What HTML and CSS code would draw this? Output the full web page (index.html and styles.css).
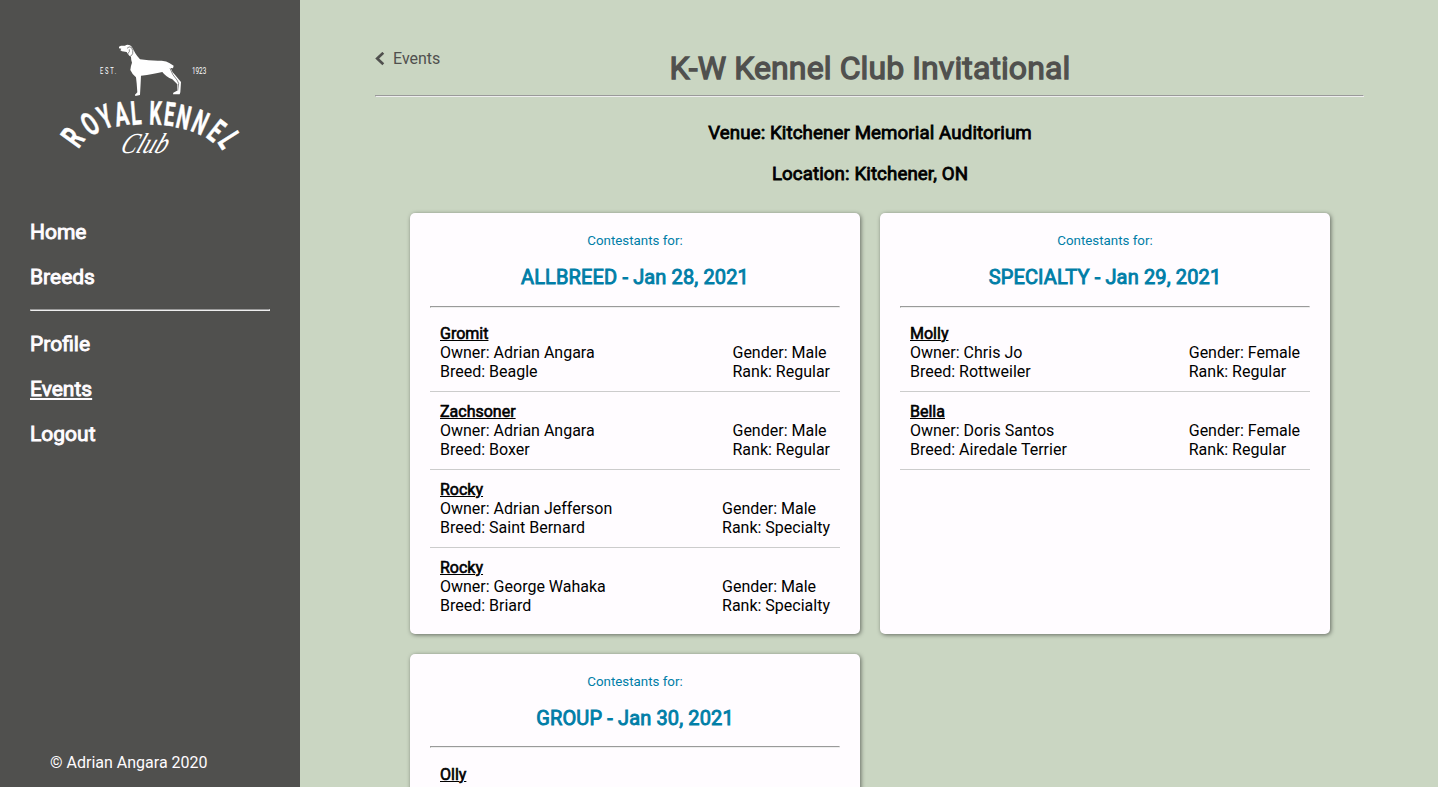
FILE: index.html
```html
<!DOCTYPE html>
<html lang="en">
<head>
<meta charset="utf-8">
<title>Royal Kennel Club</title>
<link rel="stylesheet" href="styles.css">
</head>
<body>
<div class="app">
  <aside class="sidebar">
    <svg class="logo" width="240" height="130" viewBox="30 34 240 130" role="img" aria-label="Royal Kennel Club">
      <g transform="translate(110 38) scale(.3333)">
        <path fill="#fff" d="M27 26L33 23L45 23Q52 18 60 22Q66 26 69 33L76 46Q82 56 90 64Q120 69 155 68Q170 69 178 75L191 83L189 91L182 90Q186 103 196 112L213 132L211 163L209 169L189 169L190 164L201 158L202 139L187 124Q168 117 157 102Q130 109 93 113L92 135L90 171L76 174L75 170L82 163L80 136L78 118Q66 108 61 96Q62 84 66 74Q63 66 63 57Q54 53 50 42L36 40L31 37L34 32L27 31Z"/>
        <path class="dog-line" d="M51 31Q57 24 64 28Q71 38 68 47Q64 55 59 56Q52 51 54 46Q60 42 58 34"/>
        <path class="dog-line" d="M180 91Q187 112 201 126L206 136L203 158"/>
      </g>
      <g class="logo-arc">
        <text transform="translate(73.2 137.6) rotate(-54) scale(.62 1)" y="11">R</text>
        <text transform="translate(89.9 123.8) rotate(-35) scale(.6 1)" y="11.7">O</text>
        <text transform="translate(105 116.5) rotate(-23) scale(.6 1)" y="11.7">Y</text>
        <text transform="translate(121.3 113.7) rotate(-10) scale(.62 1)" y="11.7">A</text>
        <text transform="translate(136 113) rotate(-5) scale(.58 1)" y="11.7">L</text>
        <text transform="translate(155.7 113) rotate(2) scale(.59 1)" y="11.7">K</text>
        <text transform="translate(169.5 114) rotate(7) scale(.56 1)" y="11.7">E</text>
        <text transform="translate(183.7 117) rotate(13) scale(.58 1)" y="11.7">N</text>
        <text transform="translate(200.5 122.3) rotate(24) scale(.58 1)" y="11.7">N</text>
        <text transform="translate(216.3 130.7) rotate(38) scale(.58 1)" y="11.4">E</text>
        <text transform="translate(229.3 140) rotate(58) scale(.58 1)" y="11.4">L</text>
      </g>
      <text class="logo-tiny" transform="translate(100 73.5) scale(.68 1)" textLength="24" lengthAdjust="spacing">EST.</text>
      <text class="logo-tiny" transform="translate(192 73.5) scale(.75 1)" textLength="19" lengthAdjust="spacingAndGlyphs">1923</text>
      <text class="logo-script" transform="translate(119 153) skewX(-22)" textLength="46" lengthAdjust="spacingAndGlyphs">Club</text>
    </svg>
    <nav class="nav">
      <a>Home</a>
      <a>Breeds</a>
      <hr class="nav-rule">
      <a>Profile</a>
      <a class="active">Events</a>
      <a>Logout</a>
    </nav>
    <footer class="copyright">© Adrian Angara 2020</footer>
  </aside>
  <main class="main">
    <header class="page-head">
      <a class="back"><svg width="10" height="14" viewBox="0 0 10 14"><path d="M8.3 .8L2.2 6.5L8.3 12.2" fill="none" stroke="#50504e" stroke-width="2.7"/></svg>Events</a>
      <h1>K-W Kennel Club Invitational</h1>
    </header>
    <hr class="rule">
    <h3>Venue: Kitchener Memorial Auditorium</h3>
    <h3>Location: Kitchener, ON</h3>
    <section class="cards">
      <article class="card">
        <p class="label">Contestants for:</p>
        <h2>ALLBREED - Jan 28, 2021</h2>
        <hr class="rule">
        <div class="entry"><div><b>Gromit</b><p>Owner: Adrian Angara</p><p>Breed: Beagle</p></div><div><p>Gender: Male</p><p>Rank: Regular</p></div></div>
        <div class="entry"><div><b>Zachsoner</b><p>Owner: Adrian Angara</p><p>Breed: Boxer</p></div><div><p>Gender: Male</p><p>Rank: Regular</p></div></div>
        <div class="entry"><div><b>Rocky</b><p>Owner: Adrian Jefferson</p><p>Breed: Saint Bernard</p></div><div><p>Gender: Male</p><p>Rank: Specialty</p></div></div>
        <div class="entry last"><div><b>Rocky</b><p>Owner: George Wahaka</p><p>Breed: Briard</p></div><div><p>Gender: Male</p><p>Rank: Specialty</p></div></div>
      </article>
      <article class="card">
        <p class="label">Contestants for:</p>
        <h2>SPECIALTY - Jan 29, 2021</h2>
        <hr class="rule">
        <div class="entry"><div><b>Molly</b><p>Owner: Chris Jo</p><p>Breed: Rottweiler</p></div><div><p>Gender: Female</p><p>Rank: Regular</p></div></div>
        <div class="entry"><div><b>Bella</b><p>Owner: Doris Santos</p><p>Breed: Airedale Terrier</p></div><div><p>Gender: Female</p><p>Rank: Regular</p></div></div>
      </article>
      <article class="card card-group">
        <p class="label">Contestants for:</p>
        <h2>GROUP - Jan 30, 2021</h2>
        <hr class="rule">
        <div class="entry"><div><b>Olly</b><p>Owner: Adrian Angara</p><p>Breed: Beagle</p></div><div><p>Gender: Male</p><p>Rank: Group</p></div></div>
      </article>
    </section>
  </main>
</div>
</body>
</html>
```
FILE: styles.css
```css
* { box-sizing: border-box; }
body { margin: 0; font: 16px/19px Roboto, "Liberation Sans", sans-serif; color: #000; }
p, h1, h2, h3 { margin: 0; }
.app { display: flex; height: 787px; overflow: hidden; background: #cad6c2; }
.sidebar { display: flex; flex-direction: column; width: 300px; flex: none; padding: 34px 30px 15px; background: #50504e; color: #fffcff; }
.logo { display: block; flex: none; }
.logo-arc { fill: #fff; stroke: #fff; stroke-width: .5; font-size: 33px; font-weight: 700; text-anchor: middle; }
.logo-tiny { fill: #fff; font-size: 8.5px; }
.logo-script { fill: #fff; font: italic 29px "Liberation Serif", serif; }
.dog-line { fill: none; stroke: #50504e; stroke-width: 2; }
.nav { display: flex; flex-direction: column; align-items: flex-start; gap: 20px; padding-top: 56px; }
.nav a { font-size: 21px; line-height: 25px; font-weight: 400; -webkit-text-stroke: .9px currentColor; }
.nav a.active { text-decoration: underline; text-decoration-thickness: 2px; text-underline-offset: 2px; }
.nav-rule { width: 240px; height: 2px; margin: -1px 0 1px; border: 1px inset #eee; }
.copyright { margin-top: auto; padding-left: 20px; }
.main { flex: 1; padding: 49px 73px 0 75px; }
.page-head { display: grid; grid-template-columns: 1fr auto 1fr; height: 46px; color: #50504e; }
.back { display: flex; align-items: center; gap: 8px; height: 19px; }
h1 { font-size: 32px; line-height: 38px; font-weight: 400; letter-spacing: .1px; -webkit-text-stroke: 1.3px currentColor; }
.rule { height: 2px; margin: 0; border: 1px inset #eee; }
.main > .rule { margin-right: 1px; }
h3 { margin-top: 22px; font-size: 18.72px; font-weight: 400; letter-spacing: .1px; text-align: center; -webkit-text-stroke: .8px currentColor; }
h3:first-of-type { margin-top: 27px; }
.cards { display: grid; grid-template-columns: 450px 450px; gap: 20px; justify-content: center; margin-top: 29px; }
.card { padding: 20px; border-radius: 5px; background: #fffcff; box-shadow: 1px 1px 4px rgba(0, 0, 0, .5); }
.label { font-size: 13.33px; line-height: 15px; text-align: center; color: #007ea7; }
h2 { margin: 17px 0; font-size: 20px; line-height: 24px; font-weight: 400; letter-spacing: .13px; text-align: center; color: #007ea7; -webkit-text-stroke: .9px currentColor; }
.entry { display: flex; justify-content: space-between; align-items: flex-end; padding: 10px; border-bottom: 1px solid #ccc; }
.rule + .entry { padding-top: 16px; }
.entry.last { margin-bottom: -1px; padding-bottom: 0; border-bottom: 0; }
.card-group h2 { margin-bottom: 16px; }
.card-group .rule + .entry { padding-top: 17px; }
.entry b { display: block; font-weight: 400; text-decoration: underline; -webkit-text-stroke: .6px currentColor; }
```
